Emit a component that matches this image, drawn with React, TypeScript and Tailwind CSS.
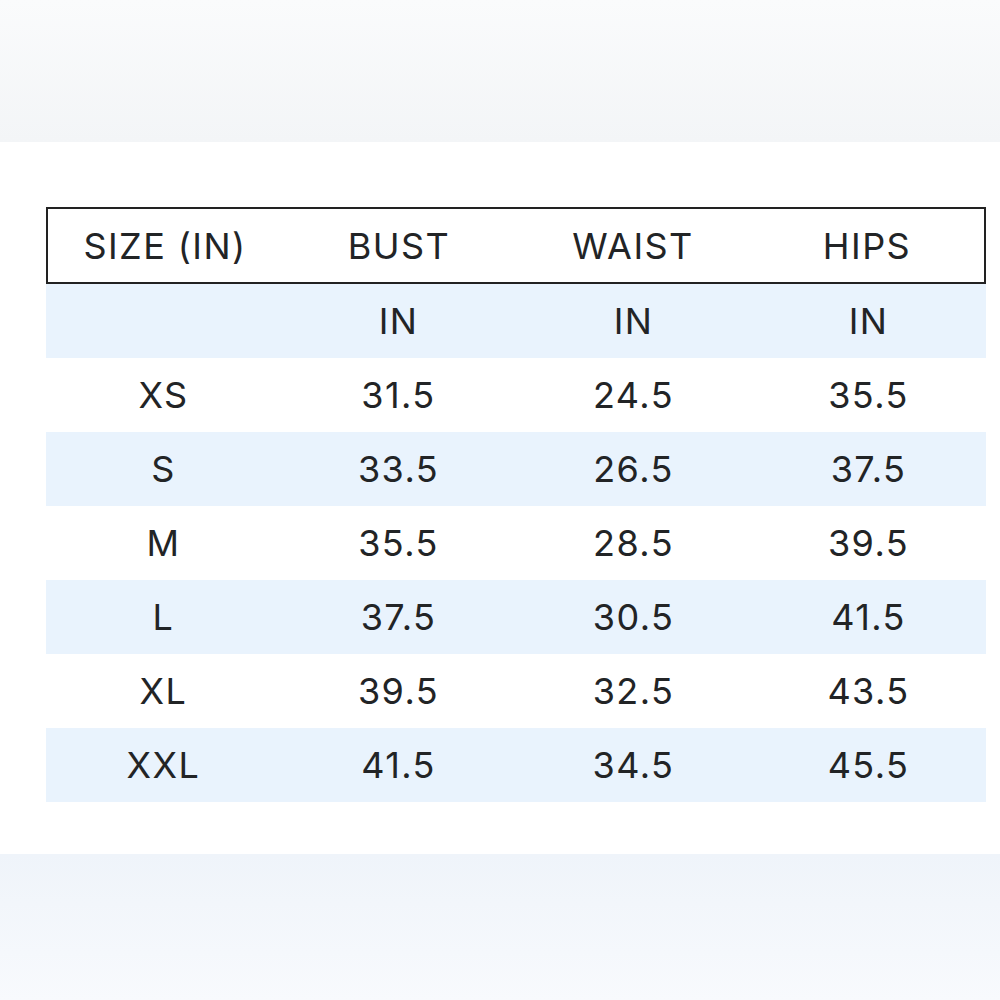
const rows = [
  ['XS', '31.5', '24.5', '35.5'],
  ['S', '33.5', '26.5', '37.5'],
  ['M', '35.5', '28.5', '39.5'],
  ['L', '37.5', '30.5', '41.5'],
  ['XL', '39.5', '32.5', '43.5'],
  ['XXL', '41.5', '34.5', '45.5'],
]

function Row({ cells, blue }: { cells: string[]; blue?: boolean }) {
  return (
    <div className={'grid grid-cols-4 h-[74px] items-center ' + (blue ? 'bg-[#e9f3fd]' : 'bg-white')}>
      {cells.map((c, i) => (
        <div key={i} className="text-center">{c}</div>
      ))}
    </div>
  )
}

export default function App() {
  return (
    <div className="w-[1000px] h-[1000px] bg-white flex flex-col text-[#222426] text-[36px] leading-none tracking-[0.04em]" style={{ fontFamily: 'Inter, "Liberation Sans", sans-serif' }}>
      <div className="h-[142px] bg-gradient-to-b from-[#fafbfc] to-[#f3f5f7]" />
      <div className="px-[46px] pt-[65px] pr-[14px]">
        <div className="grid grid-cols-4 h-[77px] items-center border-2 border-[#222] bg-white">
          {['SIZE (IN)', 'BUST', 'WAIST', 'HIPS'].map((h) => (
            <div key={h} className="text-center">{h}</div>
          ))}
        </div>
        <Row cells={['', 'IN', 'IN', 'IN']} blue />
        {rows.map((r, i) => (
          <Row key={r[0]} cells={r} blue={i % 2 === 1} />
        ))}
      </div>
      <div className="mt-[52px] flex-1 bg-gradient-to-b from-[#eff4fa] to-[#f8fafd]" />
    </div>
  )
}
